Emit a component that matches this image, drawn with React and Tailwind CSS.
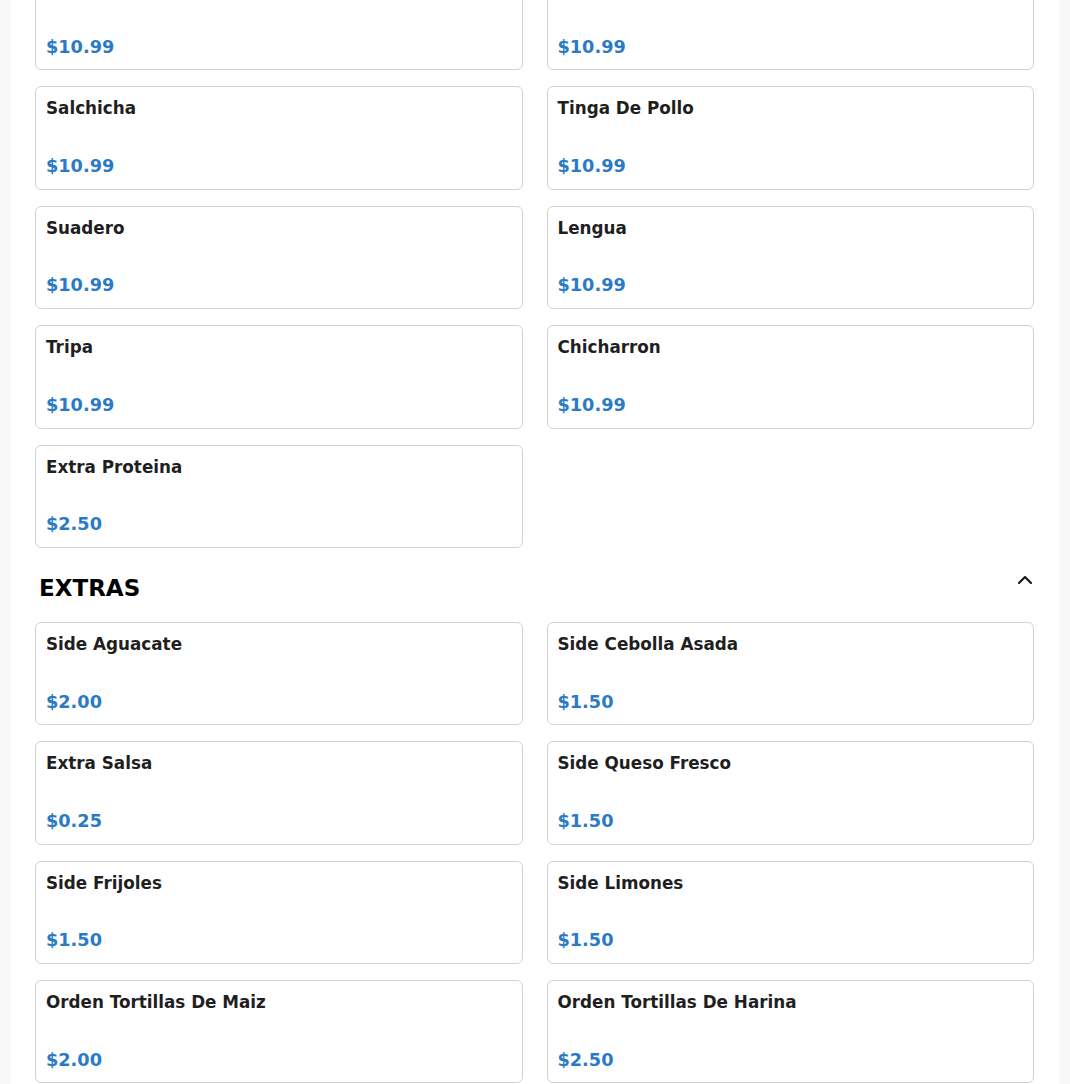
import React from "react";

const proteins = [
  ["Asada", "$10.99"],
  ["Pastor", "$10.99"],
  ["Salchicha", "$10.99"],
  ["Tinga De Pollo", "$10.99"],
  ["Suadero", "$10.99"],
  ["Lengua", "$10.99"],
  ["Tripa", "$10.99"],
  ["Chicharron", "$10.99"],
  ["Extra Proteina", "$2.50"],
];

const extras = [
  ["Side Aguacate", "$2.00"],
  ["Side Cebolla Asada", "$1.50"],
  ["Extra Salsa", "$0.25"],
  ["Side Queso Fresco", "$1.50"],
  ["Side Frijoles", "$1.50"],
  ["Side Limones", "$1.50"],
  ["Orden Tortillas De Maiz", "$2.00"],
  ["Orden Tortillas De Harina", "$2.50"],
];

function Card({ name, price }) {
  return (
    <div className="h-[103.4px] border border-[#d2d2d2] rounded-[6px] bg-white px-[10px] pt-[12px] pb-[12px] flex flex-col justify-between">
      <div className="text-[16.8px] leading-[1.17] font-bold text-[#1f1f1f]">{name}</div>
      <div className="text-[17.7px] leading-[1.17] font-bold text-[#2a7ac6]">{price}</div>
    </div>
  );
}

function Grid({ items }) {
  return (
    <div className="grid grid-cols-2 gap-x-[24px] gap-y-[16px]">
      {items.map(([n, p]) => (
        <Card key={n} name={n} price={p} />
      ))}
    </div>
  );
}

export default function App() {
  return (
    <div
      className="min-h-screen bg-[#f8f8f8] overflow-hidden"
      style={{ fontFamily: '"DejaVu Sans", sans-serif' }}
    >
      <div className="mx-[11px] bg-white pl-[24px] pr-[25px] pb-[24px] -mt-[33px]">
        <Grid items={proteins} />
        <div className="mt-[27px] mb-[20px] flex items-start justify-between pl-[4px]">
          <h2 className="text-[23px] leading-[1.17] font-bold text-black">EXTRAS</h2>
          <svg
            width="24"
            height="24"
            viewBox="0 0 24 24"
            fill="none"
            stroke="#111"
            strokeWidth="2"
            strokeLinecap="round"
            strokeLinejoin="round"
            className="mt-[-7px] mr-[-3px]"
          >
            <polyline points="6,15 12,9 18,15" />
          </svg>
        </div>
        <Grid items={extras} />
      </div>
    </div>
  );
}
